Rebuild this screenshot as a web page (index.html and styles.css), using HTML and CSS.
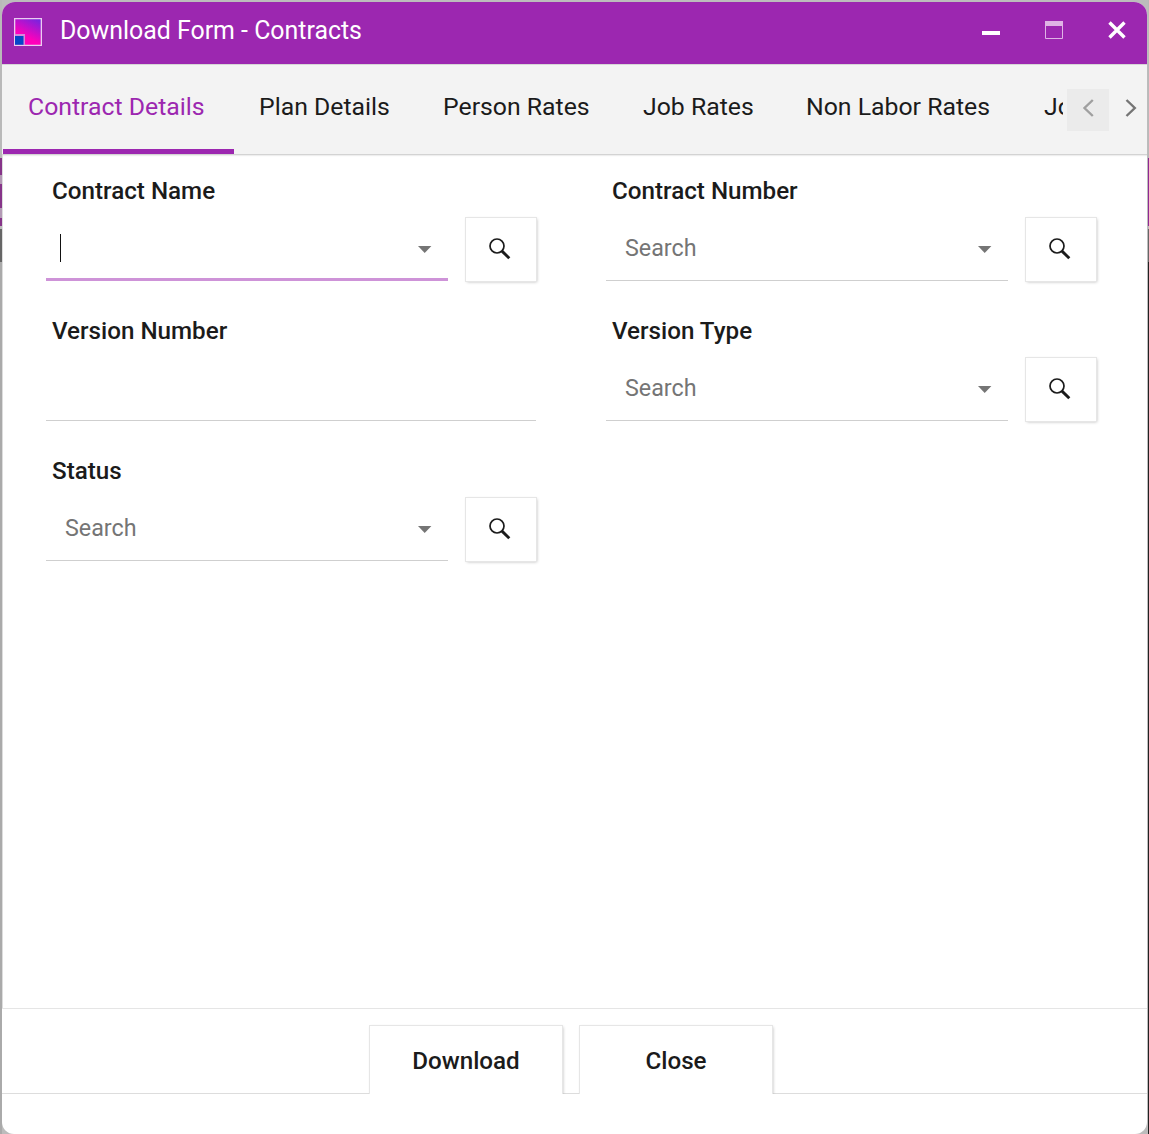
FILE: index.html
```html
<!DOCTYPE html>
<html lang="en">
<head>
<meta charset="utf-8">
<title>Download Form - Contracts</title>
<link rel="stylesheet" href="styles.css">
</head>
<body>
<svg class="symbols" aria-hidden="true">
  <symbol id="search" viewBox="0 0 24 24"><circle cx="9" cy="9" r="7" fill="none" stroke="#1b1b1b" stroke-width="1.7"/><path d="M14 14.1 21.3 21.3" fill="none" stroke="#1b1b1b" stroke-width="2.9"/></symbol>
  <symbol id="caret" viewBox="0 0 14 7"><path d="M0 0h13.4L6.7 7z" fill="#757575"/></symbol>
</svg>
<main class="window">
  <header class="titlebar">
    <svg class="logo" viewBox="0 0 28 28">
      <defs><linearGradient id="brand" x1="0.9" y1="0" x2="0.4" y2="1"><stop offset="0" stop-color="#7624df"/><stop offset=".75" stop-color="#ff00bb"/></linearGradient></defs>
      <path d="M0 0h28v28H0z" fill="#eacdf0"/><path d="M1.3 1.3h25.4v25.4H1.3z" fill="url(#brand)"/>
      <path d="M1 16h10v11H1z" fill="#d884dd"/><path d="M1 18h8.5v8.7H1z" fill="#0645c8"/>
    </svg>
    <h1 class="title">Download Form - Contracts</h1>
    <svg class="minimize" viewBox="0 0 18 18"><path d="M0 10h18v4H0z" fill="#fff"/></svg>
    <svg class="maximize" viewBox="0 0 18 18"><path d="M.5.5h17v17H.5z" fill="none" stroke="#dfb3e5"/><path d="M0 0h18v5H0z" fill="#dfb3e5"/></svg>
    <svg class="close" viewBox="0 0 18 18"><path d="m1.5 1.5 15 15m0-15-15 15" stroke="#fff" stroke-width="3.4"/></svg>
  </header>
  <nav class="tabs">
    <div class="tab-list">
      <span class="tab active">Contract Details</span><span class="tab plan">Plan Details</span><span class="tab person">Person Rates</span><span class="tab job">Job Rates</span><span class="tab labor">Non Labor Rates</span><span class="tab more">Jo</span>
    </div>
    <button class="scroll prev" aria-label="Previous tabs"><svg viewBox="0 0 12 18"><path d="M10.8 1 2.5 9l8.3 8" fill="none" stroke="#a0a0a0" stroke-width="2.4"/></svg></button>
    <button class="scroll next" aria-label="Next tabs"><svg viewBox="0 0 12 18"><path d="m1.5 1 8.3 8-8.3 8" fill="none" stroke="#757575" stroke-width="2.4"/></svg></button>
  </nav>
  <section class="form">
    <div class="field">
      <label class="label">Contract Name</label>
      <div class="row"><div class="input focused"><span class="cursor"></span><svg class="caret"><use href="#caret"/></svg></div><button class="lookup"><svg><use href="#search"/></svg></button></div>
    </div>
    <div class="field">
      <label class="label">Contract Number</label>
      <div class="row"><div class="input"><span class="hint">Search</span><svg class="caret"><use href="#caret"/></svg></div><button class="lookup"><svg><use href="#search"/></svg></button></div>
    </div>
    <div class="field">
      <label class="label">Version Number</label>
      <div class="row"><div class="input wide"></div></div>
    </div>
    <div class="field">
      <label class="label">Version Type</label>
      <div class="row"><div class="input"><span class="hint">Search</span><svg class="caret"><use href="#caret"/></svg></div><button class="lookup"><svg><use href="#search"/></svg></button></div>
    </div>
    <div class="field">
      <label class="label">Status</label>
      <div class="row"><div class="input"><span class="hint">Search</span><svg class="caret"><use href="#caret"/></svg></div><button class="lookup"><svg><use href="#search"/></svg></button></div>
    </div>
  </section>
  <footer class="actions"><button class="action">Download</button><button class="action">Close</button></footer>
</main>
</body>
</html>
```
FILE: styles.css
```css
* { box-sizing: border-box; }
html { height: 100%; overflow: hidden; }
body {
  margin: 0;
  height: 1134px;
  padding: 2px 2px 0;
  font-family: Roboto, sans-serif;
  font-size: 24.8px;
  color: #1b1b1b;
  background:
    linear-gradient(#b9b9b9 158px, #8e2a93 158px, #8e2a93 226px, #bbb 226px, #bbb 229px, #666 229px, #666 262px, #222 262px) right / 1px 100% no-repeat,
    linear-gradient(#b9b9b9 158px, #863489 158px, #863489 175px, #b39ab5 175px, #b39ab5 184px, #863489 184px, #863489 208px, #b39ab5 208px, #b39ab5 218px, #863489 218px, #863489 226px, #bbb 226px, #bbb 229px, #666 229px, #666 262px, #aaa 262px) left / 2px 100% no-repeat,
    #bcbcbc;
}
button { padding: 0; border: 0; font: inherit; color: inherit; background: #fff; }
svg { display: block; flex: none; }
.symbols { position: absolute; width: 0; height: 0; }
.window {
  display: flex;
  flex-direction: column;
  height: 1132px;
  background: #fff;
  border-radius: 13px 13px 12px 12px;
  overflow: hidden;
}
.titlebar {
  display: flex;
  align-items: center;
  flex: none;
  height: 62px;
  padding: 0 21px 6px 12px;
  color: #fff;
  background: #9c27b0;
}
.logo { width: 28px; height: 28px; margin-top: 4px; }
.title { flex: 1; margin: 1px 0 0 18px; font-size: 24.9px; font-weight: 400; }
.minimize, .maximize, .close { width: 18px; height: 18px; }
.maximize, .close { margin-left: 45px; }
.tabs {
  display: flex;
  flex: none;
  height: 91px;
  border-top: 1px solid #d6d6d6;
  border-bottom: 1px solid #d3d3d3;
  background: #f3f3f3;
  box-shadow: 0 1px 1px #eee;
}
.tab-list { display: flex; width: 1061px; padding-left: 1px; overflow: hidden; white-space: nowrap; }
.tab { flex: none; line-height: 84px; padding-left: 25px; }
.active { width: 231px; color: #9c27b0; border-bottom: 5px solid #9c27b0; }
.plan { width: 184px; }
.person { width: 200px; }
.job { width: 163px; }
.labor { width: 238px; }
.scroll { display: flex; align-items: center; justify-content: center; width: 42px; height: 42px; margin-top: 24px; padding-bottom: 4px; background: transparent; }
.scroll svg { width: 12px; height: 18px; }
.prev { flex: none; margin-left: 4px; background: #ebebeb; }
.next { flex: none; width: 38px; padding-left: 6px; }
.form {
  display: grid;
  grid-template-columns: 560px 500px;
  grid-auto-rows: 140px;
  align-content: start;
  height: 853px;
  padding-left: 43px;
  border-left: 1px solid #ddd;
}
.field { padding-top: 21px; }
.label { display: block; height: 40px; padding-left: 6px; font-size: 24.2px; line-height: 31px; font-weight: 500; }
.row { display: flex; gap: 18px; }
.input { display: flex; align-items: center; width: 402px; height: 65px; padding: 0 16px 0 19px; border-bottom: 1px solid #cfcfcf; font-size: 23.3px; }
.focused { padding: 2px 16px 0 14px; border-bottom: 3px solid #ce93d8; }
.wide { width: 490px; }
.hint { color: #757575; }
.cursor { width: 1px; height: 28px; background: #111; }
.caret { width: 14px; height: 7px; margin: 2px 0 0 auto; }
.lookup { display: flex; width: 70px; height: 63px; margin: 2px 0 0; padding: 19px 0 0 22px; box-shadow: 0 0 0 1px #e6e6e6, 1px 1px 3px #bbb; }
.lookup svg { width: 24px; height: 24px; }
.actions {
  display: flex;
  justify-content: center;
  gap: 18px;
  flex: none;
  height: 86px;
  padding: 17px 7px 0 0;
  border-top: 1px solid #e5e5e5;
  background: linear-gradient(#ddd, #ddd) bottom / 100% 1px no-repeat;
  overflow: hidden;
}
.action { width: 192px; height: 70px; font-size: 24.2px; font-weight: 500; box-shadow: 0 0 0 1px #e6e6e6, 1px 1px 3px #bbb; }
```
